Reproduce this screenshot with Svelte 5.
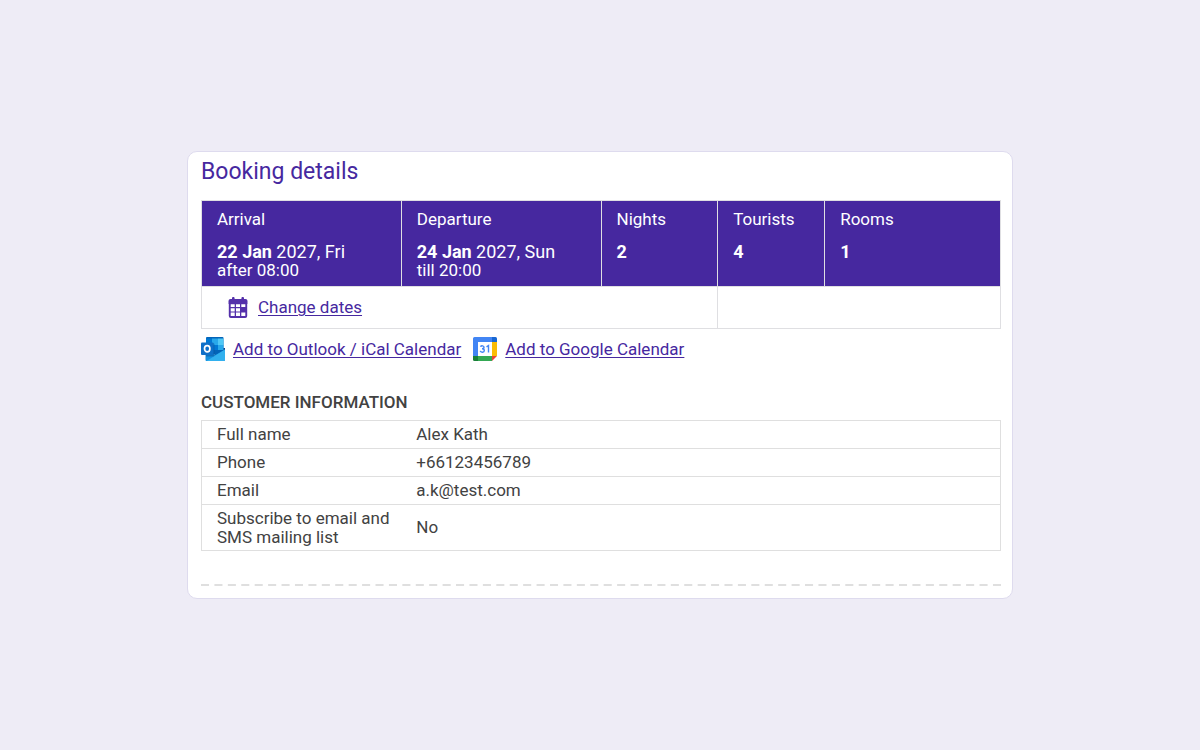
<script>
  const stay = [
    { label: 'Arrival', strong: '22 Jan', rest: ' 2027, Fri', note: 'after 08:00' },
    { label: 'Departure', strong: '24 Jan', rest: ' 2027, Sun', note: 'till 20:00' },
    { label: 'Nights', strong: '2' },
    { label: 'Tourists', strong: '4' },
    { label: 'Rooms', strong: '1' }
  ];

  const customer = [
    ['Full name', 'Alex Kath'],
    ['Phone', '+66123456789'],
    ['Email', 'a.k@test.com'],
    ['Subscribe to email and SMS mailing list', 'No']
  ];
</script>

<main>
  <section class="card">
    <h1>Booking details</h1>

    <table class="stay">
      <colgroup>
        <col class="date" /><col class="date" /><col class="nights" /><col class="tourists" /><col />
      </colgroup>
      <thead>
        <tr>
          {#each stay as item}
            <th scope="col">{item.label}</th>
          {/each}
        </tr>
      </thead>
      <tbody>
        <tr class="values">
          {#each stay as item}
            <td>
              <div class="value"><strong>{item.strong}</strong>{item.rest ?? ''}</div>
              {#if item.note}<div class="note">{item.note}</div>{/if}
            </td>
          {/each}
        </tr>
        <tr class="actions">
          <td colspan="3">
            <a class="action" href="#dates">
              <svg width="20" height="22" viewBox="0 0 20 22" aria-hidden="true">
                <path fill="#5430aa" d="M2.500 2H4V1.200a1.200 1.200 0 0 1 2.600 0V2h6.800v-.8a1.200 1.200 0 0 1 2.600 0V2h1.500a2 2 0 0 1 2 2v3h-.3v12a2 2 0 0 1-2 2H2.800a2 2 0 0 1-2-2V7H.500V4a2 2 0 0 1 2-2z" />
                <g fill="#fff">
                  <path d="M2.700 7.300h4v2.700h-4zM8 7.300h4V10H8zM13.300 7.300h4V10h-4z" />
                  <path d="M2.700 11.200h4v3.300h-4zM8 11.200h4v3.300H8z" />
                  <path d="M2.700 15.600h4v3.300h-4zM8 15.600h4v3.300H8zM13.300 15.600h4v3.300h-4z" />
                </g>
              </svg>
              <span>Change dates</span>
            </a>
          </td>
          <td colspan="2"></td>
        </tr>
      </tbody>
    </table>

    <nav class="calendars" aria-label="Calendars">
      <a href="#outlook">
        <svg width="24" height="24" viewBox="0 0 24 24" aria-hidden="true">
          <path fill="#123b80" d="M5 11h19v3l-9 4-10-4z" />
          <path fill="#0364b8" d="M6 0h15.500a1 1 0 0 1 1 1v13L15 18 5 14V1a1 1 0 0 1 1-1z" />
          <path fill="#0078d4" d="M5 1.500h6V8H5z" />
          <path fill="#28a8ea" d="M11 1.500h6V8h-6z" />
          <path fill="#50c8f5" d="M17 1.500h5.500V8H17z" />
          <path fill="#0078d4" d="M11 8h6v5h-6z" />
          <path fill="#28a8ea" d="M17 8h5.500v5H17z" />
          <path fill="#1490df" d="M4.500 13l10 5L24 12.500V23a1 1 0 0 1-1 1H5.500a1 1 0 0 1-1-1z" />
          <path fill="#32b0ee" d="M24 12.500V23a1 1 0 0 1-1 1H5.500z" />
          <path fill="#0a4f93" d="M5 6h7a1.500 1.500 0 0 1 1.500 1.500V18a1.500 1.500 0 0 1-1.500 1.500H5z" opacity=".5" />
          <rect y="5.500" width="12.500" height="12.500" rx="1" fill="#0f70c8" />
          <ellipse cx="6.200" cy="11.800" rx="2.700" ry="3.100" fill="none" stroke="#fff" stroke-width="1.700" />
        </svg>
        <span>Add to Outlook / iCal Calendar</span>
      </a>
      <a href="#google">
        <svg width="24" height="24" viewBox="0 0 24 24" aria-hidden="true">
          <path fill="#fff" d="M5 5h14v14H5z" />
          <path fill="#4285f4" d="M1.500 0H19v5H5v14H0V1.500A1.500 1.500 0 0 1 1.500 0z" />
          <path fill="#1967d2" d="M19 0h3.500A1.500 1.500 0 0 1 24 1.500V5h-5z" />
          <path fill="#fbbc04" d="M19 5h5v14h-5z" />
          <path fill="#34a853" d="M5 19h14v5H5z" />
          <path fill="#188038" d="M0 19h5v5H1.500A1.500 1.500 0 0 1 0 22.500z" />
          <path fill="#ea4335" d="M19 19h5l-5 5z" />
          <path fill="none" stroke="#4285f4" stroke-width="1.400" d="M7.500 9.700c.6-1.300 3.600-1.200 3.500.5 0 1.100-1 1.500-2 1.500 1.200 0 2.300.5 2.300 1.800 0 2.100-3.500 2.300-4.100.4M13.500 9.900l2-1.300v7" />
        </svg>
        <span>Add to Google Calendar</span>
      </a>
    </nav>

    <h2>CUSTOMER INFORMATION</h2>
    <table class="customer">
      <tbody>
        {#each customer as [label, value]}
          <tr>
            <th scope="row">{label}</th>
            <td>{value}</td>
          </tr>
        {/each}
      </tbody>
    </table>

    <svg class="divider" aria-hidden="true">
      <line x1="0" y1="1" x2="100%" y2="1" pathLength="1192" stroke-dasharray="12 8" />
    </svg>
  </section>
</main>

<style>
  :global(body) {
    margin: 0;
    background: #eeecf6;
  }

  main {
    box-sizing: border-box;
    min-height: 100vh;
    padding: 24px;
    display: flex;
    align-items: center;
    justify-content: center;
    font: 17px/19px Roboto, sans-serif;
    color: #424242;
  }

  .card {
    box-sizing: border-box;
    width: 100%;
    max-width: 826px;
    padding: 4px 11px 12px 13px;
    border: 1px solid #dedbee;
    border-radius: 10px;
    background: #fff;
  }

  h1 {
    margin: 0 0 12px;
    font-size: 23px;
    line-height: 32px;
    font-weight: 400;
    color: #46289f;
  }

  h2 {
    margin: 31px 0 8px;
    font-size: 17px;
    line-height: 20px;
    font-weight: 500;
  }

  table {
    width: 100%;
    border-collapse: collapse;
    table-layout: fixed;
  }

  th {
    font-weight: 400;
    text-align: left;
  }

  .date { width: 25%; }
  .nights { width: 14.6%; }
  .tourists { width: 13.4%; }

  .stay th,
  .stay td {
    border: 1px solid #dfdfe2;
    padding: 0 15px;
    vertical-align: top;
  }

  .stay th {
    padding-top: 9px;
    border-bottom: 0;
    background: #46289f;
    color: #fff;
  }

  .stay .values td {
    height: 44px;
    padding-top: 13px;
    border-top: 0;
    background: #46289f;
    color: #fff;
  }

  .value {
    font-size: 18px;
  }

  .stay .actions td {
    height: 41px;
    padding: 0 26px;
    vertical-align: middle;
  }

  a {
    display: inline-flex;
    align-items: center;
    color: #46289f;
    text-decoration: none;
  }

  a span {
    text-decoration: underline;
    text-decoration-thickness: 1px;
    text-underline-offset: 2px;
  }

  .action {
    gap: 10px;
    vertical-align: middle;
  }

  .calendars {
    display: flex;
    flex-wrap: wrap;
    gap: 8px 12px;
    margin-top: 8px;
  }

  .calendars a {
    gap: 8px;
  }

  .customer th,
  .customer td {
    height: 27px;
    padding: 0 15px;
    border: 1px solid #dfdfdf;
    vertical-align: middle;
  }

  .customer th {
    width: 25%;
    box-sizing: border-box;
    padding-right: 8px;
    border-right: 0;
  }

  .customer td {
    border-left: 0;
  }

  .customer tr:last-child th {
    height: 46px;
  }

  .divider {
    display: block;
    width: 100%;
    height: 2px;
    margin-top: 33px;
  }

  .divider line {
    stroke: #dfdfdf;
    stroke-width: 2px;
  }
</style>
